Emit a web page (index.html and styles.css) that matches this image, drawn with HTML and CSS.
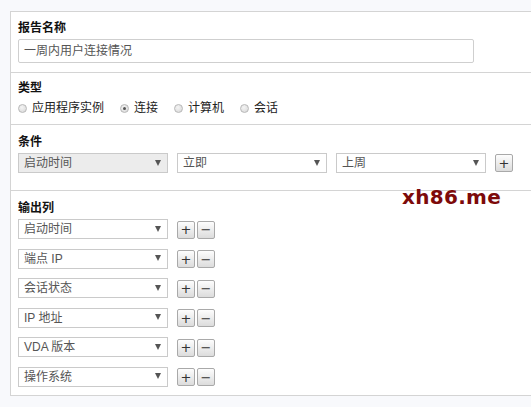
FILE: index.html
```html
<!DOCTYPE html>
<html lang="zh">
<head>
<meta charset="utf-8">
<link rel="stylesheet" href="styles.css">
</head>
<body>
<div class="panel">
  <section class="sec sec-name">
    <div class="label">报告名称</div>
    <div class="textbox">一周内用户连接情况</div>
  </section>
  <section class="sec sec-type">
    <div class="label">类型</div>
    <div class="radios">
      <span class="radio"><i class="circle"></i>应用程序实例</span>
      <span class="radio"><i class="circle checked"></i>连接</span>
      <span class="radio"><i class="circle"></i>计算机</span>
      <span class="radio"><i class="circle"></i>会话</span>
    </div>
  </section>
  <section class="sec sec-cond">
    <div class="label">条件</div>
    <div class="row">
      <div class="select disabled"><span>启动时间</span><i class="arrow"></i></div>
      <div class="select"><span>立即</span><i class="arrow"></i></div>
      <div class="select"><span>上周</span><i class="arrow"></i></div>
      <div class="btn">+</div>
    </div>
  </section>
  <section class="sec sec-out">
    <div class="label">输出列</div>
    <div class="rows">
      <div class="row"><div class="select"><span>启动时间</span><i class="arrow"></i></div><div class="btns"><div class="btn">+</div><div class="btn">−</div></div></div>
      <div class="row"><div class="select"><span>端点 IP</span><i class="arrow"></i></div><div class="btns"><div class="btn">+</div><div class="btn">−</div></div></div>
      <div class="row"><div class="select"><span>会话状态</span><i class="arrow"></i></div><div class="btns"><div class="btn">+</div><div class="btn">−</div></div></div>
      <div class="row"><div class="select"><span>IP 地址</span><i class="arrow"></i></div><div class="btns"><div class="btn">+</div><div class="btn">−</div></div></div>
      <div class="row"><div class="select"><span>VDA 版本</span><i class="arrow"></i></div><div class="btns"><div class="btn">+</div><div class="btn">−</div></div></div>
      <div class="row"><div class="select"><span>操作系统</span><i class="arrow"></i></div><div class="btns"><div class="btn">+</div><div class="btn">−</div></div></div>
    </div>
  </section>
  <div class="watermark">xh86.me</div>
</div>
</body>
</html>
```

FILE: styles.css
```css
html, body {
  margin: 0;
  padding: 0;
}
body {
  background: #f8f9fc;
  font-family: "Liberation Sans", "Noto Sans CJK SC", sans-serif;
  font-size: 12px;
  color: #222;
  height: 407px;
  overflow: hidden;
}
.panel {
  position: relative;
  margin: 11px 0 0 10px;
  background: #fff;
  border: 1px solid #d4d4d4;
  border-right: none;
}
.sec {
  padding: 8px 0 8px 7px;
  border-top: 1px solid #d4d4d4;
}
.sec:first-child {
  border-top: none;
}
.label {
  font-weight: bold;
  font-size: 12px;
  line-height: 16px;
  color: #111;
}
.sec-name {
  padding-bottom: 9px;
}
.textbox {
  margin-top: 3px;
  width: 449px;
  height: 22px;
  border: 1px solid #cfcfcf;
  border-radius: 2px;
  padding-left: 5px;
  line-height: 22px;
  color: #555;
}
.sec-type {
  padding-top: 7px;
}
.radios {
  margin-top: 4px;
  display: flex;
  gap: 16px;
  line-height: 16px;
  color: #222;
}
.radio {
  display: inline-flex;
  align-items: center;
}
.circle {
  display: inline-block;
  width: 7px;
  height: 7px;
  border: 1px solid #b8b8b8;
  border-radius: 50%;
  background: radial-gradient(circle at 40% 35%, #f4f4f4, #d6d6d6);
  margin-right: 5px;
  position: relative;
}
.circle.checked::after {
  content: "";
  position: absolute;
  left: 2px;
  top: 2px;
  width: 3px;
  height: 3px;
  border-radius: 50%;
  background: #555;
}
.sec-cond {
  padding-top: 9px;
  padding-bottom: 17px;
}
.sec-cond .row {
  margin-top: 3px;
  display: flex;
  gap: 9px;
  align-items: center;
}
.select {
  box-sizing: border-box;
  width: 150px;
  height: 20px;
  border: 1px solid #cacaca;
  background: #fff;
  display: flex;
  align-items: center;
  justify-content: space-between;
  padding: 0 6px 0 5px;
  color: #555;
  line-height: 18px;
}
.select.disabled {
  background: #ececec;
}
.arrow {
  width: 0;
  height: 0;
  border-left: 3.5px solid transparent;
  border-right: 3.5px solid transparent;
  border-top: 6px solid #555;
  margin-top: -1px;
}
.btn {
  box-sizing: border-box;
  width: 18px;
  height: 18px;
  border: 1px solid #a9a9a9;
  border-radius: 2px;
  background: linear-gradient(#fdfdfd, #dcdcdc);
  display: flex;
  align-items: center;
  justify-content: center;
  font-family: "DejaVu Sans", sans-serif;
  font-size: 13px;
  line-height: 1;
  color: #333;
}
.sec-out {
  padding-top: 9px;
  padding-bottom: 8px;
}
.rows {
  margin-top: 3px;
  display: flex;
  flex-direction: column;
  gap: 9.5px;
}
.rows .row {
  display: flex;
  align-items: center;
  gap: 9px;
}
.btns {
  display: flex;
  gap: 2px;
  margin-top: 1px;
}
.watermark {
  position: absolute;
  left: 391px;
  top: 173px;
  font-family: "DejaVu Sans", sans-serif;
  font-weight: bold;
  font-size: 20px;
  line-height: 24px;
  color: #7d0a0a;
  letter-spacing: 0.3px;
}
```
